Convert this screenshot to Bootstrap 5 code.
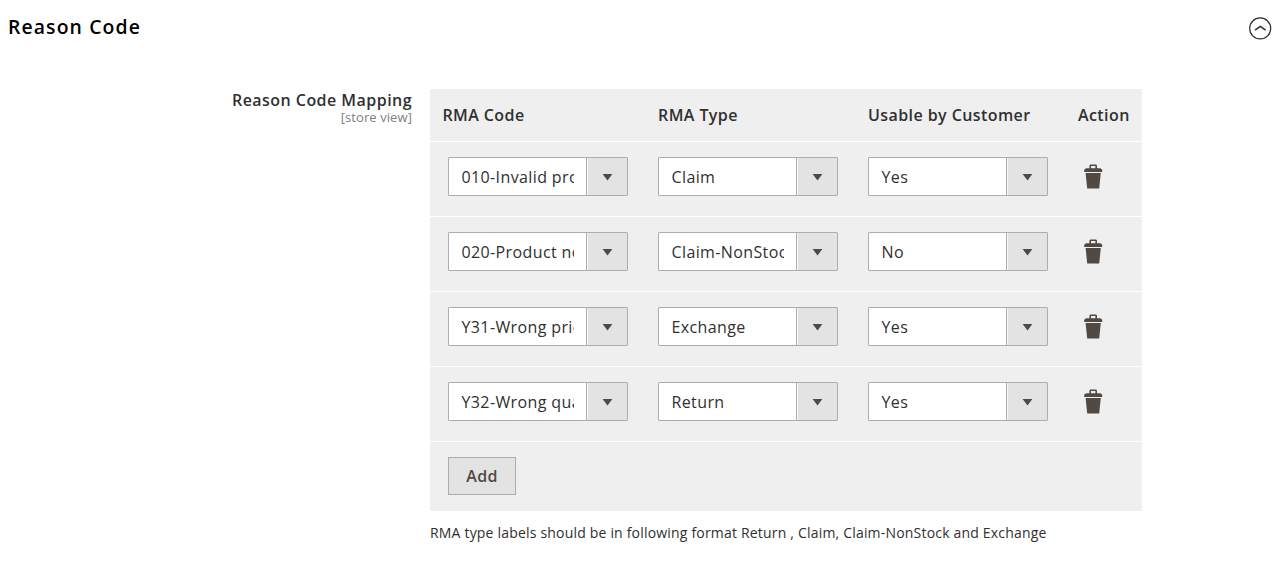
<!DOCTYPE html>
<html lang="en">
<head>
<meta charset="utf-8">
<meta name="viewport" content="width=device-width, initial-scale=1">
<title>Reason Code</title>
<link href="https://cdn.jsdelivr.net/npm/bootstrap@5.3.0/dist/css/bootstrap.min.css" rel="stylesheet">
<style>
  body { font-family: "Open Sans", sans-serif; color: #303030; background: #fff; overflow: hidden; }
  .section-head { height: 89px; padding: 13px 13px 0 8px; }
  .section-title { font-size: 19.4px; line-height: 28px; font-weight: 580; letter-spacing: 1.1px; color: #000; }
  .section-toggle { width: 24px; height: 24px; margin-top: 3px; }
  .field-label { width: 412px; line-height: 18px; padding-top: 2px; }
  .field-name { font-size: 16px; font-weight: 600; line-height: 19px; letter-spacing: .46px; }
  .field-scope { font-size: 13px; line-height: 15px; color: #808080; letter-spacing: .08px; }
  .field-control { width: 712px; margin-left: 18px; }
  .map-table { table-layout: fixed; width: 712px; background: #efefef; border-collapse: separate; border-spacing: 0; }
  .map-table th { height: 52px; padding: 0 0 0 15px; font-size: 16px; font-weight: 600; letter-spacing: .42px; white-space: nowrap; }
  .map-table th:first-child { padding-left: 12.4px; }
  .map-table td { height: 75px; padding: 15px 0 0 15px; border-top: 1px solid #fff; vertical-align: top; }
  .map-table td:first-child { padding-left: 18px; }
  .map-table tfoot td { height: 70px; }
  .code-select { width: 180px; height: 39px; border: 1px solid #adadad; border-radius: 1px; background: #fff; font-size: 16px; line-height: 38px; letter-spacing: .38px; padding: 0; color: #303030; text-align: left; }
  .code-value { width: 113px; height: 37px; margin: 0 12px; padding-left: .5px; white-space: nowrap; }
  .code-caret { width: 41px; border-left: 1px solid #adadad; background: #e3e3e3; box-shadow: inset 1px 0 #f8f8f8; }
  .trash-btn { width: 20px; height: 27px; margin: 6px 0 0 5px; }
  .add-btn { width: 68px; height: 38px; border: 1px solid #adadad; background: #e3e3e3; color: #514943; font-size: 16px; font-weight: 600; letter-spacing: .3px; }
  .field-note { font-size: 14px; line-height: 20px; margin-top: 12px; letter-spacing: .19px; }
</style>
</head>
<body>
<main>
  <header class="section-head d-flex justify-content-between align-items-start">
    <h1 class="section-title m-0">Reason Code</h1>
    <button class="section-toggle btn p-0 border-0 d-flex" aria-label="Collapse">
      <svg width="24" height="24" viewBox="0 0 24 24" fill="none" stroke="#303030"><circle cx="12.2" cy="12.4" r="10.5" stroke-width="1.2"/><path d="M7 14.2 12.3 10.4l5.3 3.8" stroke-width="1.5"/></svg>
    </button>
  </header>
  <section class="d-flex align-items-start">
    <div class="field-label text-end flex-shrink-0">
      <div class="field-name">Reason Code Mapping</div>
      <div class="field-scope">[store view]</div>
    </div>
    <div class="field-control flex-shrink-0">
      <table class="map-table">
        <colgroup><col style="width:213px"><col style="width:210px"><col style="width:210px"><col style="width:79px"></colgroup>
        <thead><tr><th>RMA Code</th><th>RMA Type</th><th>Usable by Customer</th><th>Action</th></tr></thead>
        <tbody id="mappings"></tbody>
        <tfoot><tr><td colspan="4"><button class="add-btn btn rounded-0 p-0 d-block">Add</button></td></tr></tfoot>
      </table>
      <p class="field-note mb-0"><span>RMA type labels should be in following format Return , Claim, Claim-NonStock and Exchange</span></p>
    </div>
  </section>
</main>
<script>
  const rows = [
    ['010-Invalid product', 'Claim', 'Yes'],
    ['020-Product not', 'Claim-NonStock', 'No'],
    ['Y31-Wrong price', 'Exchange', 'Yes'],
    ['Y32-Wrong quantity', 'Return', 'Yes']
  ];
  const select = v => `<button class="code-select d-flex"><span class="code-value overflow-hidden flex-shrink-0">${v}</span><span class="code-caret d-flex flex-shrink-0 h-100"><svg width="39" height="37" viewBox="0 0 39 37"><path d="M15.6 16h9.8l-4.9 6.4z" fill="#514943"/></svg></span></button>`;
  const trash = `<button class="trash-btn btn p-0 border-0 d-block" aria-label="Delete"><svg class="d-block" width="20" height="27" viewBox="0 0 20 27" fill="#514943"><path fill-rule="evenodd" d="M1.2 9V6.8L3 5.3H6.4V2.4L7.3 1.5h5.8l.9.9V5.3H17.4l1.8 1.5V9zM8 5.2h4.4V3H8z"/><path d="M2.6 10h15.2L16.2 25.6H4.2z"/></svg></button>`;
  document.getElementById('mappings').innerHTML = rows.map(r =>
    `<tr>${r.map(v => `<td>${select(v)}</td>`).join('')}<td>${trash}</td></tr>`).join('');
</script>
<script src="https://cdn.jsdelivr.net/npm/bootstrap@5.3.0/dist/js/bootstrap.bundle.min.js"></script>
</body>
</html>
